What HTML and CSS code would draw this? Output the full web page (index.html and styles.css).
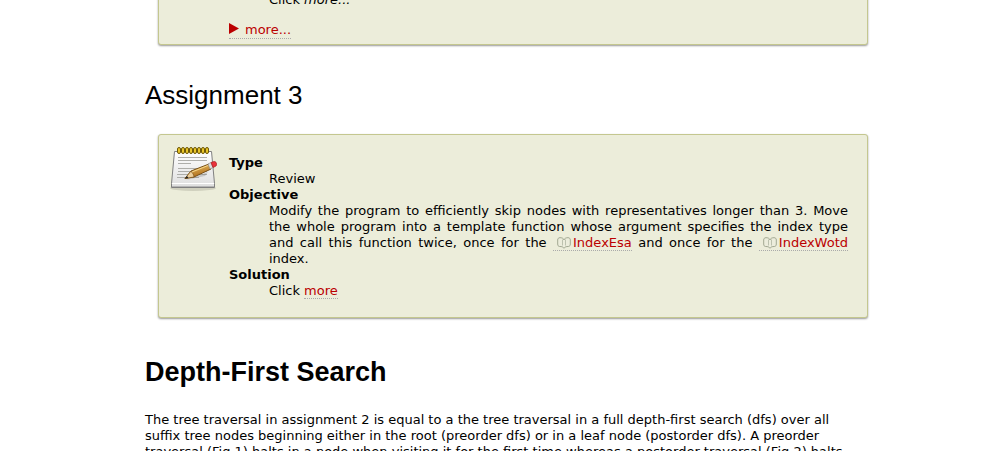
FILE: index.html
```html
<!DOCTYPE html>
<html lang="en">
<head>
<meta charset="utf-8">
<title>Index Iterators Tutorial</title>
<link rel="stylesheet" href="styles.css">
</head>
<body>
<svg class="defs" aria-hidden="true">
  <symbol id="book" viewBox="0 0 14 12">
    <path d="M7 3C6.500 1 4.500 .7 3 .7 1.500 .7.700 1.500.700 3v4c0 1.500.6 2.500 2 2.500 2 0 3.500.3 4.300 1.800C7.800 9.800 9.300 9.500 11.300 9.500c1.400 0 2-1 2-2.500V3c0-1.500-.8-2.300-2.300-2.300C9.500.7 7.500 1 7 3Z" fill="#eceddc" stroke="#a2a892"/>
    <path d="M5.500 2.500v6M8.500 2.500v6" stroke="#bcc1ae" fill="none"/>
  </symbol>
</svg>
<main class="page">
  <section class="card card-first">
    <dl class="facts">
      <dd>Click <em>more...</em></dd>
    </dl>
    <a class="link toggle" href="#solution"><svg class="arrow" viewBox="0 0 10 11" aria-hidden="true"><path d="M0 0 10 5.500 0 11Z"/></svg>more...</a>
  </section>

  <h3 class="subtitle">Assignment 3</h3>
  <section class="card">
    <svg class="notepad" viewBox="0 0 48 48" aria-hidden="true">
      <defs>
        <linearGradient id="paper" x2="0" y2="1"><stop offset="0" stop-color="#fff"/><stop offset="1" stop-color="#dedede"/></linearGradient>
        <linearGradient id="wood" x2=".4" y2="1"><stop offset="0" stop-color="#f3ca70"/><stop offset="1" stop-color="#a96714"/></linearGradient>
      </defs>
      <ellipse cx="24" cy="43" rx="23" ry="3" fill="#8d8d7d" opacity=".3"/>
      <path d="M5.500 6.500h37l3 32v4h-43v-4Z" fill="url(#paper)" stroke="#808080"/>
      <path d="M3 38.500h42" stroke="#fff"/>
      <path d="M3 41.500h42" stroke="#b5b5b5"/>
      <path d="M9 12.500h29M9 15.500h29M9 18.500h13M9 23.500h29M9 26.500h29M8 29.500h30M8 32.500h22" stroke="#aeaeaa"/>
      <g fill="#e9c529" stroke="#6f5906">
        <rect x="8.500" y="2.500" width="3" height="6" rx="1.500"/><rect x="12.500" y="2.500" width="3" height="6" rx="1.500"/><rect x="16.500" y="2.500" width="3" height="6" rx="1.500"/><rect x="20.500" y="2.500" width="3" height="6" rx="1.500"/><rect x="24.500" y="2.500" width="3" height="6" rx="1.500"/><rect x="28.500" y="2.500" width="3" height="6" rx="1.500"/><rect x="32.500" y="2.500" width="3" height="6" rx="1.500"/><rect x="36.500" y="2.500" width="3" height="6" rx="1.500"/>
      </g>
      <path d="m17 35 22-8-3 4Z" fill="#777" opacity=".3"/>
      <path d="m16 33.500 6-7.500 18-7 2 5-17 8Z" fill="url(#wood)" stroke="#785018"/>
      <path d="m16 33.500 6-7.500c1 2 3 3 3 6Z" fill="#edcf9c" stroke="#785018" stroke-width=".7"/>
      <path d="m16 33.500 2-2.500 1.500 2Z" fill="#222"/>
      <path d="m23 27 16-6.500" stroke="#f6d88a"/>
      <path d="m39 19 3-1.500 2 5-3 1.500Z" fill="#ddd" stroke="#888" stroke-width=".6"/>
      <path d="m42 17.500 3-1c2.500 0 3.500 3 2 4.500L44 22.500Z" fill="#e9323a" stroke="#a71b20" stroke-width=".7"/>
    </svg>
    <dl class="facts">
      <dt>Type</dt>
      <dd>Review</dd>
      <dt>Objective</dt>
      <dd>Modify the program to efficiently skip nodes with representatives longer than 3. Move the whole program into a template function whose argument specifies the index type and call this function twice, once for the <a class="link ref" href="#IndexEsa"><svg class="book" aria-hidden="true"><use href="#book"/></svg>IndexEsa</a> and once for the <a class="link ref" href="#IndexWotd"><svg class="book" aria-hidden="true"><use href="#book"/></svg>IndexWotd</a> index.</dd>
      <dt>Solution</dt>
      <dd>Click <a class="link" href="#more">more</a></dd>
    </dl>
  </section>

  <h2 class="title">Depth-First Search</h2>
  <p class="text">The tree traversal in assignment 2 is equal to a the tree traversal in a full depth-first search (dfs) over all<br>suffix tree nodes beginning either in the root (preorder dfs) or in a leaf node (postorder dfs). A preorder<br>traversal (Fig.1) halts in a node when visiting it for the first time whereas a postorder traversal (Fig.2) halts</p>
</main>
</body>
</html>
```
FILE: styles.css
```css
html {
  overflow: hidden;
}

body {
  margin: 0;
  background: #fff;
  color: #000;
  font: 13px/16px Verdana, "DejaVu Sans", sans-serif;
}

.defs {
  position: absolute;
  width: 0;
  height: 0;
}

.page {
  display: flow-root;
  padding: 0 127px 0 145px;
}

.card {
  position: relative;
  margin: 0 13px;
  padding: 20px 19px 18px 70px;
  border: 1px solid #c4c78f;
  border-radius: 3px;
  background: #ecedda;
  box-shadow: 0 1px 2px #999;
}

.card-first {
  margin-top: -29px;
  padding-bottom: 5px;
}

.notepad {
  position: absolute;
  top: 10px;
  left: 10px;
  width: 48px;
  height: 48px;
}

.facts {
  margin: 0;
}

.facts dt {
  font-weight: bold;
}

.facts dd {
  margin: 0 0 0 40px;
  text-align: justify;
}

.link {
  border-bottom: 1px dotted #aaa;
  color: #b00;
  text-decoration: none;
}

.toggle {
  display: inline-block;
  margin-top: 14px;
}

.arrow {
  width: 10px;
  height: 11px;
  margin-right: 6px;
  fill: #b00;
}

.ref {
  padding-left: 4px;
  white-space: nowrap;
}

.book {
  width: 14px;
  height: 12px;
  margin-right: 2px;
  vertical-align: -2px;
}

.subtitle,
.title {
  font-family: Arial, "Liberation Sans", sans-serif;
}

.subtitle {
  margin: 35px 0 24px;
  font-size: 26px;
  font-weight: normal;
  line-height: 30px;
}

.title {
  margin: 38px 0 24px;
  font-size: 27px;
  line-height: 32px;
}

.text {
  margin: 0;
  white-space: nowrap;
}
```
